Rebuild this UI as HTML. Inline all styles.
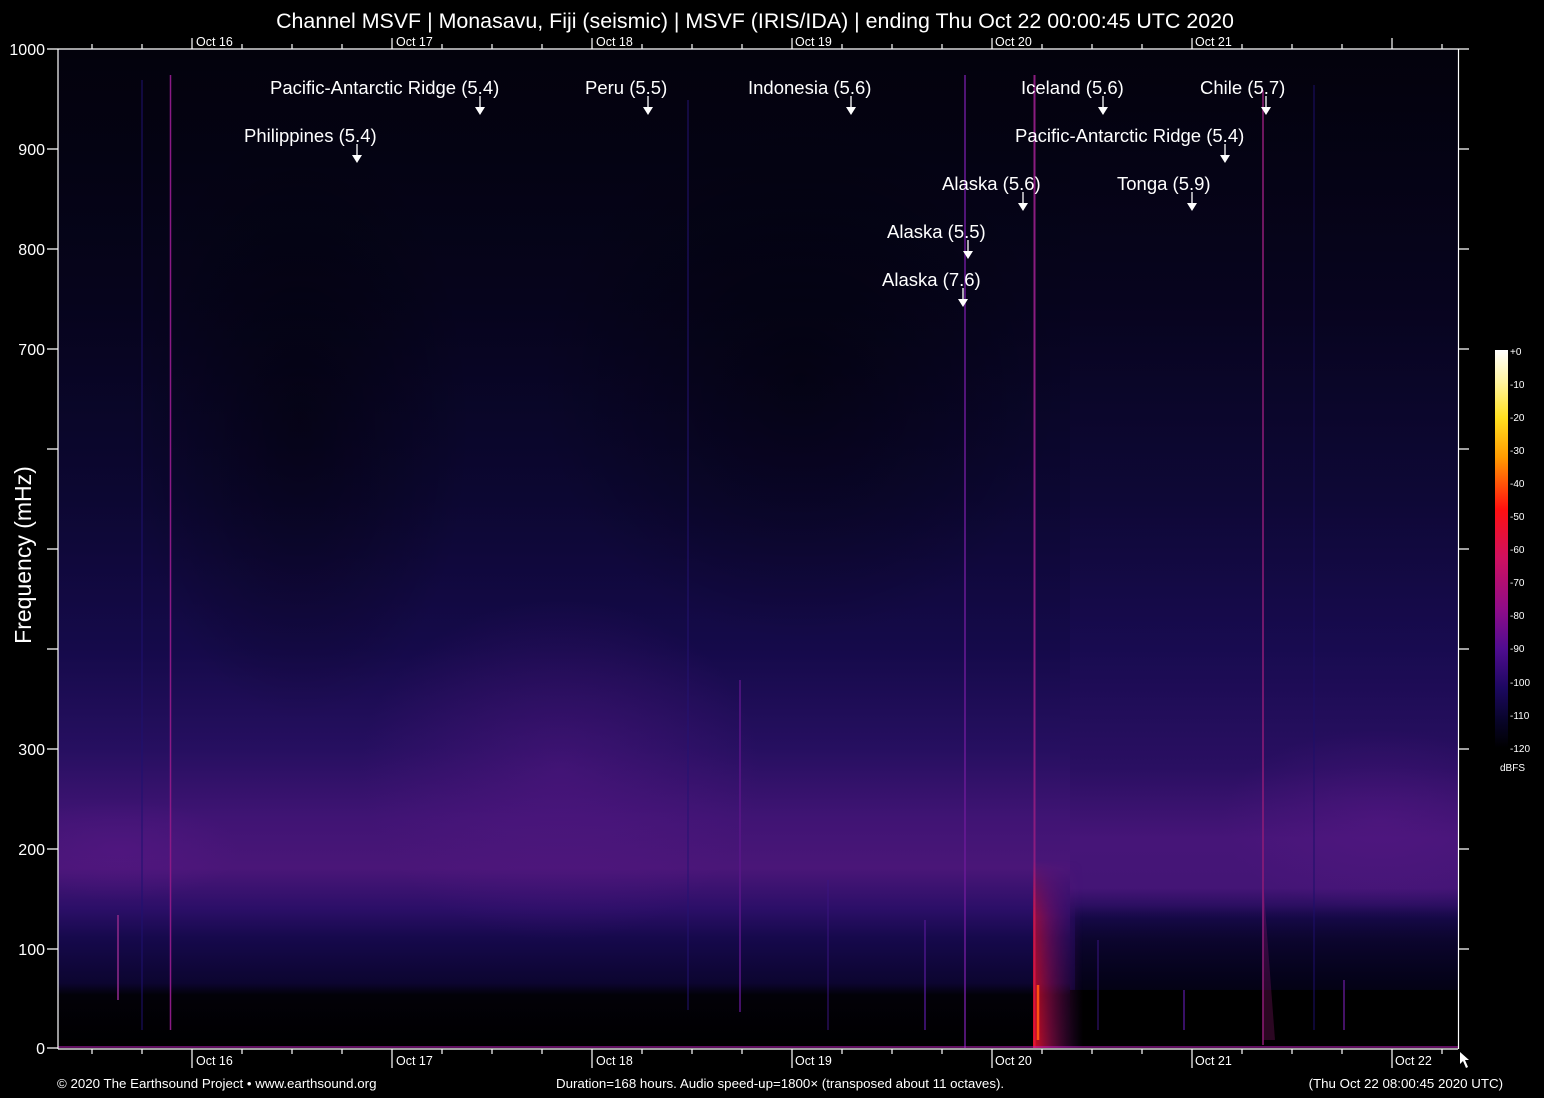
<!DOCTYPE html>
<html><head><meta charset="utf-8"><style>
html,body{margin:0;padding:0;background:#000;width:1544px;height:1098px;overflow:hidden}
svg text{font-family:"Liberation Sans",Arial,sans-serif;fill:#fff}
</style></head><body>
<svg width="1544" height="1098" viewBox="0 0 1544 1098" xmlns="http://www.w3.org/2000/svg">
<defs>
<clipPath id="plot"><rect x="58" y="49" width="1400" height="999"/></clipPath>
<linearGradient id="bg" x1="0" y1="49" x2="0" y2="1048" gradientUnits="userSpaceOnUse">
<stop offset="0" stop-color="#03020c"/>
<stop offset="0.25" stop-color="#06041c"/>
<stop offset="0.45" stop-color="#0c0732"/>
<stop offset="0.6" stop-color="#150a4a"/>
<stop offset="0.7" stop-color="#260f60"/>
<stop offset="0.77" stop-color="#401474"/>
<stop offset="0.82" stop-color="#4a1678"/>
<stop offset="0.86" stop-color="#2c0f68"/>
<stop offset="0.89" stop-color="#16094c"/>
<stop offset="0.935" stop-color="#0c0530"/>
<stop offset="0.947" stop-color="#020108"/>
<stop offset="1" stop-color="#000"/>
</linearGradient>
<linearGradient id="bgR" x1="0" y1="49" x2="0" y2="1048" gradientUnits="userSpaceOnUse">
<stop offset="0" stop-color="#03020c"/>
<stop offset="0.25" stop-color="#07041e"/>
<stop offset="0.45" stop-color="#0e0836"/>
<stop offset="0.6" stop-color="#180b50"/>
<stop offset="0.72" stop-color="#2a0f62"/>
<stop offset="0.79" stop-color="#461578"/>
<stop offset="0.84" stop-color="#441576"/>
<stop offset="0.87" stop-color="#1a0a52"/>
<stop offset="0.94" stop-color="#0a0430"/>
<stop offset="0.95" stop-color="#020108"/>
<stop offset="1" stop-color="#000"/>
</linearGradient>
<radialGradient id="blob" cx="0.5" cy="0.5" r="0.5">
<stop offset="0" stop-color="#5a1888" stop-opacity="0.45"/>
<stop offset="1" stop-color="#5a1888" stop-opacity="0"/>
</radialGradient>
<radialGradient id="dark" cx="0.5" cy="0.5" r="0.5">
<stop offset="0" stop-color="#000" stop-opacity="0.45"/>
<stop offset="1" stop-color="#000" stop-opacity="0"/>
</radialGradient>
<linearGradient id="trough" x1="0" y1="0" x2="0" y2="1">
<stop offset="0" stop-color="#05031c" stop-opacity="0"/>
<stop offset="0.4" stop-color="#05031c" stop-opacity="0.6"/>
<stop offset="1" stop-color="#020110" stop-opacity="0.9"/>
</linearGradient>
<linearGradient id="red" x1="0" y1="0" x2="1" y2="0">
<stop offset="0" stop-color="#ff1020" stop-opacity="0.85"/>
<stop offset="0.35" stop-color="#c01060" stop-opacity="0.55"/>
<stop offset="1" stop-color="#601090" stop-opacity="0"/>
</linearGradient>
<linearGradient id="redv" x1="0" y1="0" x2="0" y2="1">
<stop offset="0" stop-color="#fff" stop-opacity="0"/>
<stop offset="0.3" stop-color="#fff" stop-opacity="0.6"/>
<stop offset="1" stop-color="#fff" stop-opacity="1"/>
</linearGradient>
<mask id="rm"><rect x="1030" y="860" width="60" height="188" fill="url(#redv)"/></mask>
<linearGradient id="cb" x1="0" y1="0" x2="0" y2="1">
<stop offset="0" stop-color="#ffffff"/>
<stop offset="0.08" stop-color="#fff4a0"/>
<stop offset="0.17" stop-color="#ffe020"/>
<stop offset="0.27" stop-color="#ff9a00"/>
<stop offset="0.4" stop-color="#ff1010"/>
<stop offset="0.52" stop-color="#d0105e"/>
<stop offset="0.65" stop-color="#900c88"/>
<stop offset="0.75" stop-color="#500c90"/>
<stop offset="0.85" stop-color="#1c0860"/>
<stop offset="0.93" stop-color="#08042a"/>
<stop offset="1" stop-color="#000"/>
</linearGradient>
</defs>

<g clip-path="url(#plot)">
<rect x="58" y="49" width="1400" height="999" fill="url(#bg)"/>
<rect x="1070" y="49" width="388" height="999" fill="url(#bgR)"/>
<ellipse cx="560" cy="770" rx="200" ry="170" fill="url(#blob)"/>
<ellipse cx="1380" cy="820" rx="160" ry="90" fill="url(#blob)"/>
<ellipse cx="120" cy="850" rx="120" ry="50" fill="url(#blob)"/>
<ellipse cx="300" cy="420" rx="170" ry="300" fill="url(#dark)"/>
<ellipse cx="800" cy="380" rx="260" ry="260" fill="url(#dark)"/>
<rect x="1075" y="905" width="383" height="90" fill="url(#trough)"/>
<rect x="1070" y="990" width="388" height="58" fill="#000"/>

<g stroke-linecap="butt">
<line x1="170.5" y1="75" x2="170.5" y2="1030" stroke="#8a1a86" stroke-width="1.5"/>
<line x1="142" y1="80" x2="142" y2="1030" stroke="#1e1070" stroke-width="1"/>
<line x1="118" y1="915" x2="118" y2="1000" stroke="#8a2888" stroke-width="2" opacity="0.8"/>
<line x1="688" y1="100" x2="688" y2="1010" stroke="#241272" stroke-width="1"/>
<line x1="740" y1="680" x2="740" y2="1012" stroke="#5a1688" stroke-width="1.5"/>
<line x1="828" y1="880" x2="828" y2="1030" stroke="#3a1480" stroke-width="1"/>
<line x1="965" y1="75" x2="965" y2="1048" stroke="#6a1a96" stroke-width="1.5"/>
<line x1="925" y1="920" x2="925" y2="1030" stroke="#4a1688" stroke-width="1.5"/>
<line x1="1034.5" y1="75" x2="1034.5" y2="1048" stroke="#8a1c80" stroke-width="2"/>
<line x1="1263" y1="90" x2="1263" y2="1045" stroke="#901c78" stroke-width="1.5"/>
<line x1="1314" y1="85" x2="1314" y2="1030" stroke="#1c0e6a" stroke-width="1"/>
<line x1="1098" y1="940" x2="1098" y2="1030" stroke="#3a1480" stroke-width="1"/>
<line x1="1184" y1="990" x2="1184" y2="1030" stroke="#4a1688" stroke-width="1.5"/>
<line x1="1344" y1="980" x2="1344" y2="1030" stroke="#5a1888" stroke-width="1.5"/>
</g>
<rect x="1033" y="860" width="50" height="188" fill="url(#red)" mask="url(#rm)"/>
<line x1="1038" y1="985" x2="1038" y2="1040" stroke="#ff5010" stroke-width="2.5"/>
<path d="M1263 880 L1263 1040 L1275 1040 Z" fill="#901870" opacity="0.3"/>
<line x1="58" y1="1047" x2="1458" y2="1047" stroke="#c020c0" stroke-width="1"/>
</g>

<g stroke="#fff" stroke-width="1.2" fill="none">
<line x1="58" y1="49" x2="1458" y2="49"/>
<line x1="58" y1="1049" x2="1458" y2="1049"/>
<line x1="58" y1="49" x2="58" y2="1049"/>
<line x1="1458.5" y1="49" x2="1458.5" y2="1049"/>
<path d="M92 49V44M142 49V44M242 49V44M292 49V44M342 49V44M442 49V44M492 49V44M542 49V44M642 49V44M692 49V44M742 49V44M842 49V44M892 49V44M942 49V44M1042 49V44M1092 49V44M1142 49V44M1242 49V44M1292 49V44M1342 49V44M1442 49V44"/>
<path d="M192 49V38M392 49V38M592 49V38M792 49V38M992 49V38M1192 49V38M1392 49V38"/>
<path d="M92 1049V1054M142 1049V1054M242 1049V1054M292 1049V1054M342 1049V1054M442 1049V1054M492 1049V1054M542 1049V1054M642 1049V1054M692 1049V1054M742 1049V1054M842 1049V1054M892 1049V1054M942 1049V1054M1042 1049V1054M1092 1049V1054M1142 1049V1054M1242 1049V1054M1292 1049V1054M1342 1049V1054M1442 1049V1054"/>
<path d="M192 1049V1068M392 1049V1068M592 1049V1068M792 1049V1068M992 1049V1068M1192 1049V1068M1392 1049V1068"/>
<path d="M47 49H58M47 149H58M47 249H58M47 349H58M47 449H58M47 549H58M47 649H58M47 749H58M47 849H58M47 949H58M47 1048H58"/>
<path d="M1458 49H1469M1458 149H1469M1458 249H1469M1458 349H1469M1458 449H1469M1458 549H1469M1458 649H1469M1458 749H1469M1458 849H1469M1458 949H1469"/>
</g>

<g font-size="12.5">
<text x="196" y="46">Oct 16</text><text x="396" y="46">Oct 17</text><text x="596" y="46">Oct 18</text>
<text x="795" y="46">Oct 19</text><text x="995" y="46">Oct 20</text><text x="1195" y="46">Oct 21</text>
<text x="196" y="1065">Oct 16</text><text x="396" y="1065">Oct 17</text><text x="596" y="1065">Oct 18</text>
<text x="795" y="1065">Oct 19</text><text x="995" y="1065">Oct 20</text><text x="1195" y="1065">Oct 21</text>
<text x="1395" y="1065">Oct 22</text>
</g>
<g font-size="16" text-anchor="end">
<text x="45" y="55">1000</text><text x="45" y="155">900</text><text x="45" y="255">800</text>
<text x="45" y="355">700</text><text x="45" y="755">300</text><text x="45" y="855">200</text>
<text x="45" y="955">100</text><text x="45" y="1054">0</text>
</g>
<text transform="translate(31,555) rotate(-90)" font-size="23" text-anchor="middle">Frequency (mHz)</text>
<text x="755" y="28" font-size="21.4" text-anchor="middle">Channel MSVF | Monasavu, Fiji (seismic) | MSVF (IRIS/IDA) | ending Thu Oct 22 00:00:45 UTC 2020</text>

<g font-size="18.5">
<text x="270" y="94">Pacific-Antarctic Ridge (5.4)</text>
<text x="244" y="142">Philippines (5.4)</text>
<text x="585" y="94">Peru (5.5)</text>
<text x="748" y="94">Indonesia (5.6)</text>
<text x="1021" y="94">Iceland (5.6)</text>
<text x="1200" y="94">Chile (5.7)</text>
<text x="1015" y="142">Pacific-Antarctic Ridge (5.4)</text>
<text x="942" y="190">Alaska (5.6)</text>
<text x="1117" y="190">Tonga (5.9)</text>
<text x="887" y="238">Alaska (5.5)</text>
<text x="882" y="286">Alaska (7.6)</text>
</g>
<g fill="#fff" stroke="#fff" stroke-width="1.3">
<path d="M480 96V107"/><path d="M475 107H485L480 115Z" stroke="none"/>
<path d="M357 144V155"/><path d="M352 155H362L357 163Z" stroke="none"/>
<path d="M648 96V107"/><path d="M643 107H653L648 115Z" stroke="none"/>
<path d="M851 96V107"/><path d="M846 107H856L851 115Z" stroke="none"/>
<path d="M1103 96V107"/><path d="M1098 107H1108L1103 115Z" stroke="none"/>
<path d="M1266 96V107"/><path d="M1261 107H1271L1266 115Z" stroke="none"/>
<path d="M1225 144V155"/><path d="M1220 155H1230L1225 163Z" stroke="none"/>
<path d="M1023 192V203"/><path d="M1018 203H1028L1023 211Z" stroke="none"/>
<path d="M1192 192V203"/><path d="M1187 203H1197L1192 211Z" stroke="none"/>
<path d="M968 240V251"/><path d="M963 251H973L968 259Z" stroke="none"/>
<path d="M963 288V299"/><path d="M958 299H968L963 307Z" stroke="none"/>
</g>

<rect x="1495" y="350" width="13" height="398" fill="url(#cb)"/>
<g font-size="10" fill="#ddd">
<text x="1510" y="355">+0</text><text x="1510" y="388">-10</text><text x="1510" y="421">-20</text>
<text x="1510" y="454">-30</text><text x="1510" y="487">-40</text><text x="1510" y="520">-50</text>
<text x="1510" y="553">-60</text><text x="1510" y="586">-70</text><text x="1510" y="619">-80</text>
<text x="1510" y="652">-90</text><text x="1510" y="686">-100</text><text x="1510" y="719">-110</text>
<text x="1510" y="752">-120</text><text x="1500" y="771">dBFS</text>
</g>

<path d="M1460 1052 L1460 1064 L1463 1061 L1466 1068 L1468 1067 L1465 1060 L1469 1060 Z" fill="#fff"/>

<g font-size="13.3">
<text x="57" y="1088">© 2020 The Earthsound Project • www.earthsound.org</text>
<text x="556" y="1088">Duration=168 hours. Audio speed-up=1800× (transposed about 11 octaves).</text>
<text x="1503" y="1088" text-anchor="end">(Thu Oct 22 08:00:45 2020 UTC)</text>
</g>
</svg>
</body></html>
